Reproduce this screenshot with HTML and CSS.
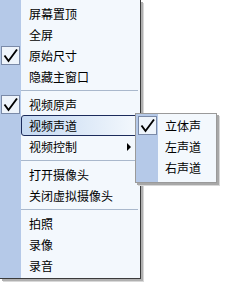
FILE: index.html
```html
<!DOCTYPE html>
<html>
<head>
<meta charset="utf-8">
<link rel="stylesheet" href="styles.css">
</head>
<body>
<div class="menu">
  <div class="item"><span class="gut"></span><span class="label">屏幕置顶</span></div>
  <div class="item"><span class="gut"></span><span class="label">全屏</span></div>
  <div class="item"><span class="gut"><span class="check"><svg width="17" height="17" viewBox="0 0 17 17"><path d="M2.5 8.5 L6.5 14 L15 2.5" fill="none" stroke="#000" stroke-width="1.9"/></svg></span></span><span class="label">原始尺寸</span></div>
  <div class="item"><span class="gut"></span><span class="label">隐藏主窗口</span></div>
  <div class="sep"><span class="gut"></span><span class="line"></span></div>
  <div class="item"><span class="gut"><span class="check"><svg width="17" height="17" viewBox="0 0 17 17"><path d="M2.5 8.5 L6.5 14 L15 2.5" fill="none" stroke="#000" stroke-width="1.9"/></svg></span></span><span class="label">视频原声</span></div>
  <div class="item hot"><span class="gut"></span><span class="label">视频声道</span>
    <div class="submenu">
      <div class="item"><span class="gut"><span class="check"><svg width="17" height="17" viewBox="0 0 17 17"><path d="M2.5 8.5 L6.5 14 L15 2.5" fill="none" stroke="#000" stroke-width="1.9"/></svg></span></span><span class="label">立体声</span></div>
      <div class="item"><span class="gut"></span><span class="label">左声道</span></div>
      <div class="item"><span class="gut"></span><span class="label">右声道</span></div>
    </div>
  </div>
  <div class="item"><span class="gut"></span><span class="label">视频控制</span><span class="arrow"></span></div>
  <div class="sep"><span class="gut"></span><span class="line"></span></div>
  <div class="item"><span class="gut"></span><span class="label">打开摄像头</span></div>
  <div class="item"><span class="gut"></span><span class="label">关闭虚拟摄像头</span></div>
  <div class="sep"><span class="gut"></span><span class="line"></span></div>
  <div class="item"><span class="gut"></span><span class="label">拍照</span></div>
  <div class="item"><span class="gut"></span><span class="label">录像</span></div>
  <div class="item"><span class="gut"></span><span class="label">录音</span></div>
</div>
</body>
</html>
```
FILE: styles.css
```css
html, body {
  margin: 0;
  padding: 0;
  background: #fff;
}
body {
  width: 242px;
  height: 287px;
  overflow: hidden;
  font-family: "Noto Sans CJK SC", "Noto Sans", sans-serif;
  font-size: 12px;
  color: #000;
}
.menu {
  position: relative;
  width: 140px;
  padding: 3px 0 2px 0;
  background: linear-gradient(to right, #b5c9e8 0, #b5c9e8 21px, #f3f8fd 21px);
  border-right: 1px solid #3a3a3a;
  border-bottom: 1px solid #3a3a3a;
  box-shadow: 2px 2px 0 #b0b0b0, 3px 3px 0 #d8d8d8;
  display: flex;
  flex-direction: column;
}
.item {
  position: relative;
  height: 21px;
  display: flex;
  align-items: center;
}
.gut {
  width: 21px;
  height: 21px;
  flex: none;
  display: flex;
  align-items: center;
  justify-content: center;
}
.label {
  padding-left: 8px;
  line-height: 21px;
}
.check {
  width: 17px;
  height: 17px;
  border: 1px solid #7a8aa8;
  background: #eef4fb;
  display: flex;
}
.sep {
  height: 7px;
  display: flex;
  align-items: center;
}
.sep .gut { height: 7px; }
.line {
  flex: 1;
  height: 1px;
  background: #a9b8cc;
  margin-right: 2px;
}
.hot::before {
  content: "";
  position: absolute;
  left: 21px;
  right: 2px;
  top: 0;
  bottom: 0;
  border: 1px solid #1c2c5c;
  border-radius: 3px;
  background: linear-gradient(to right, #c4d8f1, #f3f8fd);
}
.hot .label { position: relative; }
.arrow {
  position: absolute;
  left: 127px;
  top: 7px;
  width: 0;
  height: 0;
  border-top: 4px solid transparent;
  border-bottom: 4px solid transparent;
  border-left: 4px solid #000;
}
.submenu {
  position: absolute;
  left: 135px;
  top: -2px;
  width: 80px;
  padding: 1px 0 4px 0;
  background: linear-gradient(to right, #b5c9e8 0, #b5c9e8 22px, #f3f8fd 22px);
  border: 1px solid #9a9a9a;
  box-shadow: 2px 2px 0 #a8a8a8, 3px 3px 0 #d8d8d8;
  display: flex;
  flex-direction: column;
  z-index: 2;
}
.submenu .gut { width: 22px; }
.submenu .label { padding-left: 7px; }
```
